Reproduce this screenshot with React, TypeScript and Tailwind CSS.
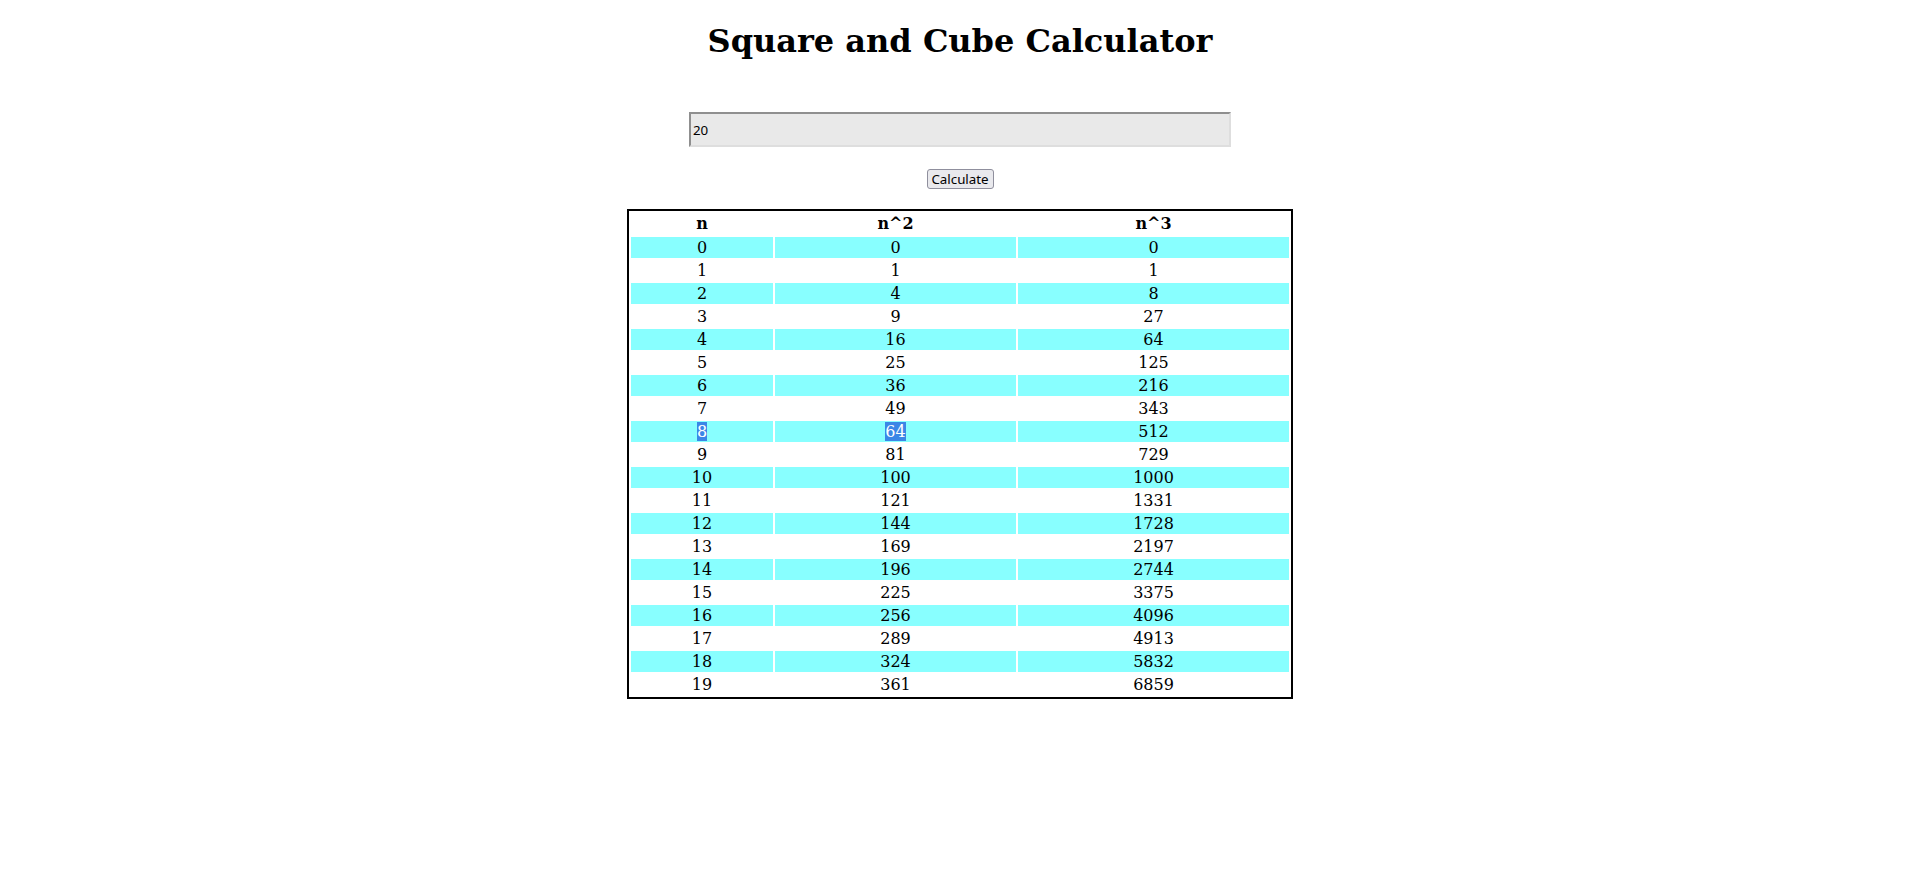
import React, { useState } from 'react'

const serif = "font-['DejaVu_Serif',serif]"

function App() {
  const [value, setValue] = useState('20')
  const [count, setCount] = useState(20)

  const rows = Array.from({ length: count }, (_, n) => n)

  return (
    <div className={`min-h-screen bg-white text-black ${serif}`}>
      <h1 className="text-center text-[32px] font-bold leading-[37px] pt-[23px] m-0">
        Square and Cube Calculator
      </h1>

      <div className="flex flex-col items-center pt-[52px]">
        <input
          type="text"
          value={value}
          onChange={(e) => setValue(e.target.value)}
          className="w-[542px] h-[35px] px-[2px] bg-[#e9e9e9] text-[13.33px] font-['Noto_Sans',sans-serif] border-2 border-t-[#8f8f8f] border-l-[#8f8f8f] border-r-[#dedede] border-b-[#dedede] outline-none"
        />

        <button
          onClick={() => setCount(Math.max(0, parseInt(value) || 0))}
          className="mt-[22px] w-[67px] h-[20px] px-0 text-[13.33px] leading-[16px] font-['Noto_Sans',sans-serif] bg-[#e9e9ed] border border-[#8f8f9d] rounded-[3px]"
        >
          Calculate
        </button>

        <table className="mt-[20px] w-[666px] table-fixed border-2 border-black border-separate border-spacing-[2px] text-[16px] leading-[19px]">
          <colgroup>
            <col className="w-[142px]" />
            <col className="w-[241px]" />
            <col className="w-[271px]" />
          </colgroup>
          <thead>
            <tr>
              <th className="p-px font-bold text-center leading-[20px]">n</th>
              <th className="p-px font-bold text-center leading-[20px]">n^2</th>
              <th className="p-px font-bold text-center leading-[20px]">n^3</th>
            </tr>
          </thead>
          <tbody>
            {rows.map((n) => {
              const bg = n % 2 === 0 ? 'bg-[#88ffff]' : 'bg-white'
              const selected = n === 8
              return (
                <tr key={n}>
                  <td className={`p-px text-center ${bg}`}>
                    {selected ? <span className="bg-[#3b86e6] text-white">{n}</span> : n}
                  </td>
                  <td className={`p-px text-center ${bg}`}>
                    {selected ? <span className="bg-[#3b86e6] text-white">{n * n}</span> : n * n}
                  </td>
                  <td className={`p-px text-center ${bg}`}>{n * n * n}</td>
                </tr>
              )
            })}
          </tbody>
        </table>
      </div>
    </div>
  )
}

export default App
